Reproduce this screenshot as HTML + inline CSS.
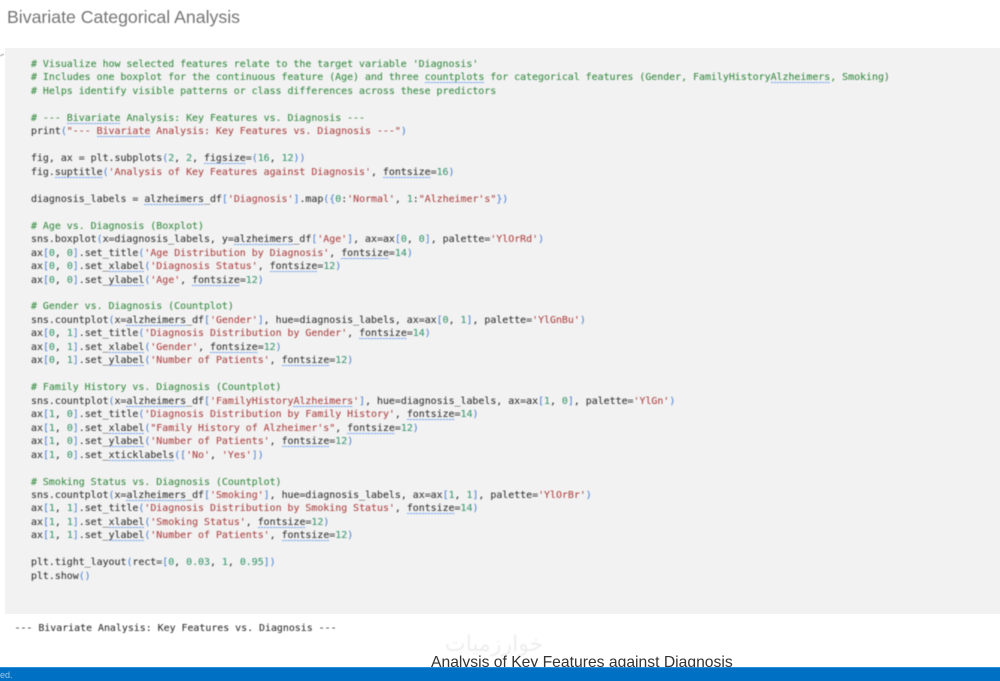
<!DOCTYPE html>
<html><head><meta charset="utf-8">
<style>
html,body{margin:0;padding:0;background:#fff}
#r{position:relative;width:1000px;height:681px;overflow:hidden;background:#fff}
#t{position:absolute;left:7px;top:7px;font:17.7px/20px "Liberation Sans",sans-serif;color:#757575;white-space:nowrap;filter:blur(.4px)}
#cell{position:absolute;left:5px;top:48px;width:995px;height:566px;background:#f2f2f2}
#code{position:absolute;left:31px;top:58px;margin:0;font:9.91px/13.47px "DejaVu Sans Mono","Liberation Mono",monospace;color:#3a3a3a;white-space:pre;filter:blur(.4px);-webkit-text-stroke:.12px}
.c{color:#3f8f4a}.s{color:#b04a4a}.n{color:#3e9a72}.p{color:#5b8ad6}
.u{background:repeating-linear-gradient(90deg,#7aa6ee 0 2px,rgba(122,166,238,.3) 2px 3px) left bottom/100% 1px no-repeat}
#o{position:absolute;left:14.5px;top:621.5px;margin:0;font:9.91px/13.47px "DejaVu Sans Mono","Liberation Mono",monospace;color:#333;white-space:pre;filter:blur(.4px);-webkit-text-stroke:.1px}
#wm{position:absolute;left:445px;top:632px;font:22px/26px "DejaVu Sans",sans-serif;color:#eee;letter-spacing:1px;white-space:nowrap;filter:blur(.6px)}
#h{position:absolute;left:431px;top:654px;font:15.7px/18px "Liberation Sans",sans-serif;color:#333;white-space:nowrap;filter:blur(.3px)}
#bar{position:absolute;left:0;top:667px;width:1000px;height:14px;background:#0070c4;border-top:1px solid #2a8fdc;box-sizing:border-box}
#bt{position:absolute;left:0;top:669px;font:9px/12px "Liberation Sans",sans-serif;color:#9cc8ea;filter:blur(.3px)}
#k{position:absolute;left:0;top:54px;width:4px;height:2px;background:#ccc;transform:rotate(-25deg)}
</style></head><body><div id="r">
<div id="t">Bivariate Categorical Analysis</div>
<div id="cell"></div><div id="k"></div>
<pre id="code"><span class="c"># Visualize how selected features relate to the target variable 'Diagnosis'
# Includes one boxplot for the continuous feature (Age) and three <span class="u">countplots</span> for categorical features (Gender, FamilyHistory<span class="u">Alzheimers</span>, Smoking)
# Helps identify visible patterns or class differences across these predictors

# --- <span class="u">Bivariate</span> Analysis: Key Features vs. Diagnosis ---</span>
print<span class="p">(</span><span class="s">"--- <span class="u">Bivariate</span> Analysis: Key Features vs. Diagnosis ---"</span><span class="p">)</span>

fig, ax = plt.subplots<span class="p">(</span><span class="n">2</span>, <span class="n">2</span>, <span class="u">figsize</span>=<span class="p">(</span><span class="n">16</span>, <span class="n">12</span><span class="p">))</span>
fig.<span class="u">suptitle</span><span class="p">(</span><span class="s">'Analysis of Key Features against Diagnosis'</span>, <span class="u">fontsize</span>=<span class="n">16</span><span class="p">)</span>

diagnosis_labels = <span class="u">alzheimers</span>_df<span class="p">[</span><span class="s">'Diagnosis'</span><span class="p">]</span>.map<span class="p">({</span><span class="n">0</span>:<span class="s">'Normal'</span>, <span class="n">1</span>:<span class="s">"Alzheimer's"</span><span class="p">})</span>

<span class="c"># Age vs. Diagnosis (Boxplot)</span>
sns.boxplot<span class="p">(</span>x=diagnosis_labels, y=<span class="u">alzheimers</span>_df<span class="p">[</span><span class="s">'Age'</span><span class="p">]</span>, ax=ax<span class="p">[</span><span class="n">0</span>, <span class="n">0</span><span class="p">]</span>, palette=<span class="s">'YlOrRd'</span><span class="p">)</span>
ax<span class="p">[</span><span class="n">0</span>, <span class="n">0</span><span class="p">]</span>.set_title<span class="p">(</span><span class="s">'Age Distribution by Diagnosis'</span>, <span class="u">fontsize</span>=<span class="n">14</span><span class="p">)</span>
ax<span class="p">[</span><span class="n">0</span>, <span class="n">0</span><span class="p">]</span>.set_<span class="u">xlabel</span><span class="p">(</span><span class="s">'Diagnosis Status'</span>, <span class="u">fontsize</span>=<span class="n">12</span><span class="p">)</span>
ax<span class="p">[</span><span class="n">0</span>, <span class="n">0</span><span class="p">]</span>.set_<span class="u">ylabel</span><span class="p">(</span><span class="s">'Age'</span>, <span class="u">fontsize</span>=<span class="n">12</span><span class="p">)</span>

<span class="c"># Gender vs. Diagnosis (Countplot)</span>
sns.countplot<span class="p">(</span>x=<span class="u">alzheimers</span>_df<span class="p">[</span><span class="s">'Gender'</span><span class="p">]</span>, hue=diagnosis_labels, ax=ax<span class="p">[</span><span class="n">0</span>, <span class="n">1</span><span class="p">]</span>, palette=<span class="s">'YlGnBu'</span><span class="p">)</span>
ax<span class="p">[</span><span class="n">0</span>, <span class="n">1</span><span class="p">]</span>.set_title<span class="p">(</span><span class="s">'Diagnosis Distribution by Gender'</span>, <span class="u">fontsize</span>=<span class="n">14</span><span class="p">)</span>
ax<span class="p">[</span><span class="n">0</span>, <span class="n">1</span><span class="p">]</span>.set_<span class="u">xlabel</span><span class="p">(</span><span class="s">'Gender'</span>, <span class="u">fontsize</span>=<span class="n">12</span><span class="p">)</span>
ax<span class="p">[</span><span class="n">0</span>, <span class="n">1</span><span class="p">]</span>.set_<span class="u">ylabel</span><span class="p">(</span><span class="s">'Number of Patients'</span>, <span class="u">fontsize</span>=<span class="n">12</span><span class="p">)</span>

<span class="c"># Family History vs. Diagnosis (Countplot)</span>
sns.countplot<span class="p">(</span>x=<span class="u">alzheimers</span>_df<span class="p">[</span><span class="s">'FamilyHistory<span class="u">Alzheimers</span>'</span><span class="p">]</span>, hue=diagnosis_labels, ax=ax<span class="p">[</span><span class="n">1</span>, <span class="n">0</span><span class="p">]</span>, palette=<span class="s">'YlGn'</span><span class="p">)</span>
ax<span class="p">[</span><span class="n">1</span>, <span class="n">0</span><span class="p">]</span>.set_title<span class="p">(</span><span class="s">'Diagnosis Distribution by Family History'</span>, <span class="u">fontsize</span>=<span class="n">14</span><span class="p">)</span>
ax<span class="p">[</span><span class="n">1</span>, <span class="n">0</span><span class="p">]</span>.set_<span class="u">xlabel</span><span class="p">(</span><span class="s">"Family History of Alzheimer's"</span>, <span class="u">fontsize</span>=<span class="n">12</span><span class="p">)</span>
ax<span class="p">[</span><span class="n">1</span>, <span class="n">0</span><span class="p">]</span>.set_<span class="u">ylabel</span><span class="p">(</span><span class="s">'Number of Patients'</span>, <span class="u">fontsize</span>=<span class="n">12</span><span class="p">)</span>
ax<span class="p">[</span><span class="n">1</span>, <span class="n">0</span><span class="p">]</span>.set_<span class="u">xticklabels</span><span class="p">([</span><span class="s">'No'</span>, <span class="s">'Yes'</span><span class="p">])</span>

<span class="c"># Smoking Status vs. Diagnosis (Countplot)</span>
sns.countplot<span class="p">(</span>x=<span class="u">alzheimers</span>_df<span class="p">[</span><span class="s">'Smoking'</span><span class="p">]</span>, hue=diagnosis_labels, ax=ax<span class="p">[</span><span class="n">1</span>, <span class="n">1</span><span class="p">]</span>, palette=<span class="s">'YlOrBr'</span><span class="p">)</span>
ax<span class="p">[</span><span class="n">1</span>, <span class="n">1</span><span class="p">]</span>.set_title<span class="p">(</span><span class="s">'Diagnosis Distribution by Smoking Status'</span>, <span class="u">fontsize</span>=<span class="n">14</span><span class="p">)</span>
ax<span class="p">[</span><span class="n">1</span>, <span class="n">1</span><span class="p">]</span>.set_<span class="u">xlabel</span><span class="p">(</span><span class="s">'Smoking Status'</span>, <span class="u">fontsize</span>=<span class="n">12</span><span class="p">)</span>
ax<span class="p">[</span><span class="n">1</span>, <span class="n">1</span><span class="p">]</span>.set_<span class="u">ylabel</span><span class="p">(</span><span class="s">'Number of Patients'</span>, <span class="u">fontsize</span>=<span class="n">12</span><span class="p">)</span>

plt.tight_layout<span class="p">(</span>rect=<span class="p">[</span><span class="n">0</span>, <span class="n">0.03</span>, <span class="n">1</span>, <span class="n">0.95</span><span class="p">])</span>
plt.show<span class="p">()</span></pre>
<pre id="o">--- Bivariate Analysis: Key Features vs. Diagnosis ---</pre>
<div id="wm">خوارزميات</div>
<div id="h">Analysis of Key Features against Diagnosis</div>
<div id="bar"></div>
<div id="bt">ed.</div>
</div></body></html>
